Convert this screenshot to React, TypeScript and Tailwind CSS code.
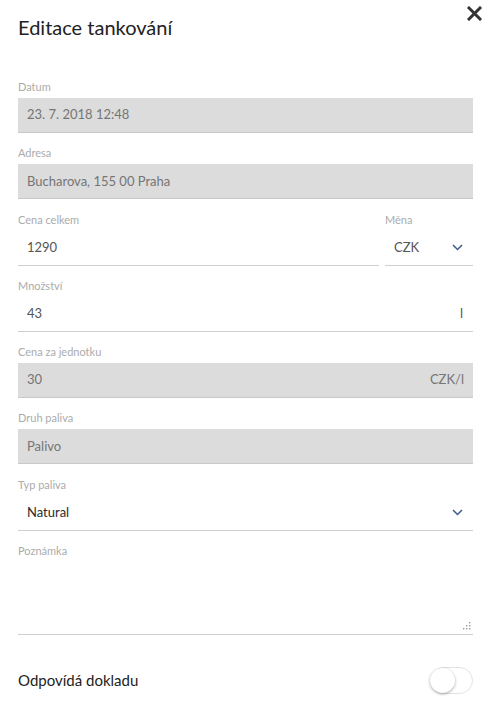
const font = { fontFamily: "Lato, 'Open Sans', sans-serif" }

function Chevron() {
  return (
    <svg width="11" height="7" viewBox="0 0 11 7" fill="none" stroke="#3d5a8a" strokeWidth={1.5}>
      <path d="M1 1l4.5 4.5L10 1" />
    </svg>
  )
}

function Label({ children }: { children: React.ReactNode }) {
  return <div className="h-[18px] pt-[0px] text-[11px] leading-[14px] text-[#ababab]">{children}</div>
}

function GrayField({ value, suffix }: { value: string; suffix?: string }) {
  return (
    <div className="flex h-[35px] items-center justify-between bg-[#dcdcdc] border-b border-[#c9c9c9] px-[9px] text-[13px] text-[#757575]">
      <span>{value}</span>
      {suffix && <span>{suffix}</span>}
    </div>
  )
}

function LineField({ value, right, dark }: { value: string; right?: React.ReactNode; dark?: boolean }) {
  return (
    <div className={`flex h-[35px] items-center justify-between border-b border-[#cfcfcf] pl-[9px] pr-[10px] text-[13px] ${dark ? "text-[#2a2a2a]" : "text-[#555]"}`}>
      <span>{value}</span>
      {right}
    </div>
  )
}

export default function App() {
  return (
    <div className="min-h-screen bg-white pl-[18px] pr-[17px]" style={font}>
      {/* Header */}
      <div className="relative h-[80px] pt-[14px]">
        <h1 className="text-[20px] leading-[26px] text-[#222]">Editace tankování</h1>
        <button className="absolute right-[-9px] top-[6px] p-0">
          <svg width="15" height="15" viewBox="0 0 15 15" stroke="#333" strokeWidth={3} strokeLinecap="square">
            <path d="M2 2l11 11M13 2L2 13" />
          </svg>
        </button>
      </div>

      <div className="flex flex-col gap-[13.3px]">
        <div>
          <Label>Datum</Label>
          <GrayField value="23. 7. 2018 12:48" />
        </div>
        <div>
          <Label>Adresa</Label>
          <GrayField value="Bucharova, 155 00 Praha" />
        </div>
        <div className="flex gap-[6px]">
          <div className="flex-1">
            <Label>Cena celkem</Label>
            <LineField value="1290" />
          </div>
          <div className="w-[88px]">
            <Label>Měna</Label>
            <LineField value="CZK" right={<Chevron />} />
          </div>
        </div>
        <div>
          <Label>Množství</Label>
          <LineField value="43" right={<span>l</span>} />
        </div>
        <div>
          <Label>Cena za jednotku</Label>
          <GrayField value="30" suffix="CZK/l" />
        </div>
        <div>
          <Label>Druh paliva</Label>
          <GrayField value="Palivo" />
        </div>
        <div>
          <Label>Typ paliva</Label>
          <LineField value="Natural" dark right={<Chevron />} />
        </div>
        <div>
          <Label>Poznámka</Label>
          <div className="relative h-[73px] border-b border-[#cfcfcf]">
            <svg className="absolute right-[2px] bottom-[4px]" width="8" height="8" viewBox="0 0 8 8" fill="#999">
              <rect x="6" y="0" width="1.4" height="1.4" />
              <rect x="3" y="3" width="1.4" height="1.4" />
              <rect x="6" y="3" width="1.4" height="1.4" />
              <rect x="0" y="6" width="1.4" height="1.4" />
              <rect x="3" y="6" width="1.4" height="1.4" />
              <rect x="6" y="6" width="1.4" height="1.4" />
            </svg>
          </div>
        </div>
      </div>

      {/* Toggle row */}
      <div className="mt-[32px] flex items-center justify-between">
        <span className="text-[15px] text-[#222]">Odpovídá dokladu</span>
        <div className="relative h-[27px] w-[43px] rounded-full border border-[#e2e2e2] bg-white">
          <div className="absolute left-[-1px] top-[0px] h-[25px] w-[25px] rounded-full bg-white shadow-[0_1px_3px_rgba(0,0,0,0.35)]" />
        </div>
      </div>
    </div>
  )
}
